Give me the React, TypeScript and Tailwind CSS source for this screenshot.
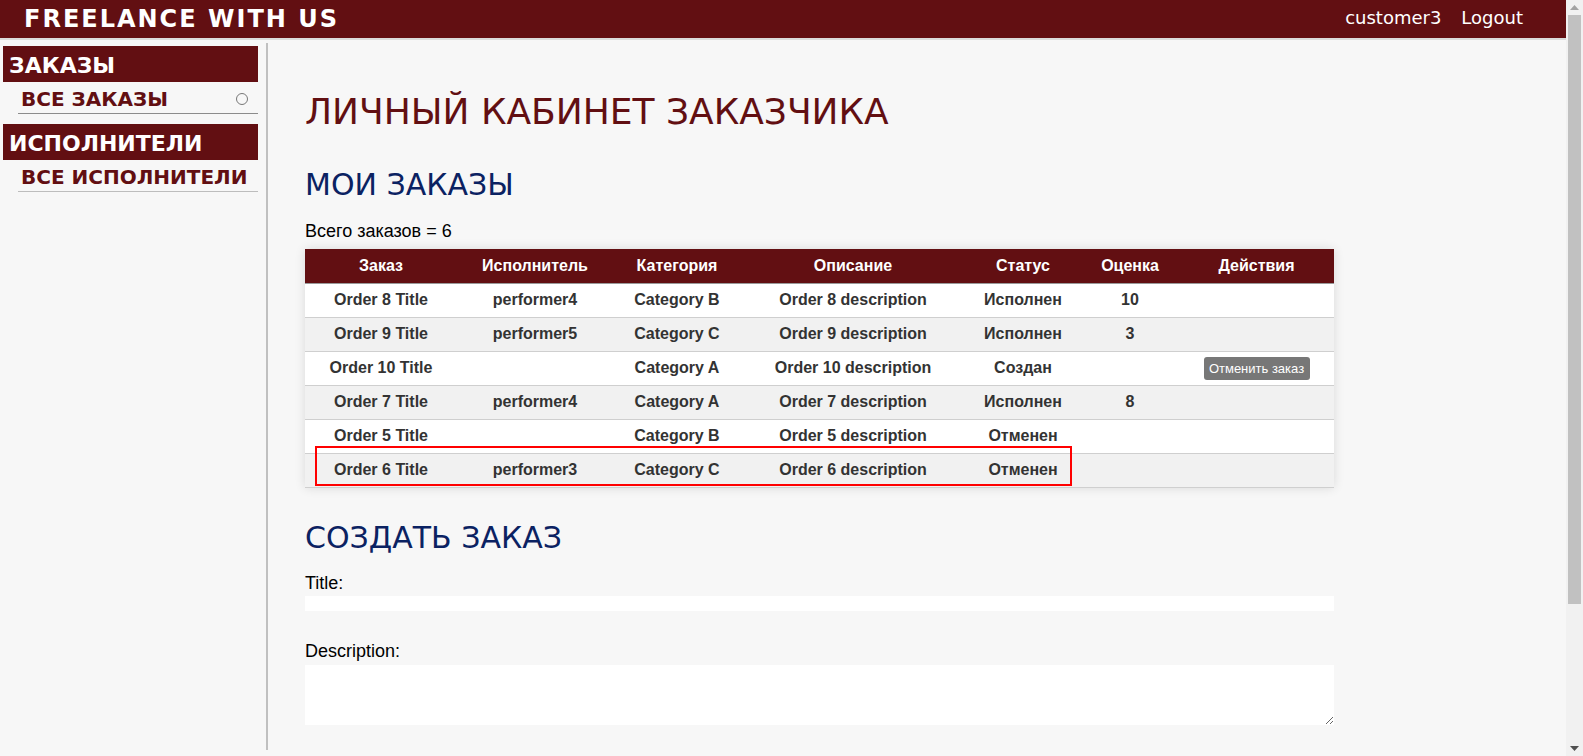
import React from "react";

const rows = [
  { t: "Order 8 Title", p: "performer4", c: "Category B", d: "Order 8 description", s: "Исполнен", r: "10", a: false },
  { t: "Order 9 Title", p: "performer5", c: "Category C", d: "Order 9 description", s: "Исполнен", r: "3", a: false },
  { t: "Order 10 Title", p: "", c: "Category A", d: "Order 10 description", s: "Создан", r: "", a: true },
  { t: "Order 7 Title", p: "performer4", c: "Category A", d: "Order 7 description", s: "Исполнен", r: "8", a: false },
  { t: "Order 5 Title", p: "", c: "Category B", d: "Order 5 description", s: "Отменен", r: "", a: false },
  { t: "Order 6 Title", p: "performer3", c: "Category C", d: "Order 6 description", s: "Отменен", r: "", a: false },
];

const heads = ["Заказ", "Исполнитель", "Категория", "Описание", "Статус", "Оценка", "Действия"];
const widths = [152, 156, 128, 224, 116, 98, 155];

function Scrollbar() {
  return (
    <div className="sticky top-0 w-[17px] h-[756px] bg-[#f1f1f1] flex flex-col items-center shrink-0">
      <div className="h-[15px] w-full flex items-center justify-center">
        <svg width="9" height="5" viewBox="0 0 9 5"><path d="M0 5 L4.5 0 L9 5 Z" fill="#a3a3a3" /></svg>
      </div>
      <div className="w-[13px] h-[589px] bg-[#c1c1c1]" />
      <div className="flex-1" />
      <div className="h-[15px] w-full flex items-center justify-center">
        <svg width="9" height="5" viewBox="0 0 9 5"><path d="M0 0 L4.5 5 L9 0 Z" fill="#505050" /></svg>
      </div>
    </div>
  );
}

export default function App() {
  return (
    <div className="flex items-start bg-[#f7f7f7] font-['DejaVu_Sans',sans-serif]">
      <div className="flex-1 min-w-0 min-h-[940px] bg-[#f7f7f7]">
        <header className="h-[38px] bg-[#620f12] flex items-center justify-between pl-[24px] pr-[43px] shadow-[0_2px_0_#dcdcdc]">
          <div className="text-white font-bold text-[24px] tracking-[2px] leading-none">FREELANCE WITH US</div>
          <div className="flex items-center gap-[20px] text-white text-[18px] leading-none pb-[2px]">
            <span>customer3</span>
            <span>Logout</span>
          </div>
        </header>
        <div className="flex">
          <aside className="w-[268px] h-[707px] mt-[5px] border-r-2 border-[#c0c0c0] pl-[3px] pr-[8px] pt-[3px] shrink-0">
            <div className="h-[36px] bg-[#620f12] text-white font-bold text-[22px] flex items-center pl-[6px] pt-[2px]">ЗАКАЗЫ</div>
            <div className="ml-[15px] h-[32px] border-b border-[#8c8c8c] flex items-center justify-between pl-[3px] pr-[10px] pt-[2px]">
              <span className="text-[#620f12] font-bold text-[20px]">ВСЕ ЗАКАЗЫ</span>
              <span className="w-[12px] h-[12px] rounded-full border border-[#777]" />
            </div>
            <div className="h-[36px] mt-[10px] bg-[#620f12] text-white font-bold text-[22px] flex items-center pl-[6px] pt-[2px]">ИСПОЛНИТЕЛИ</div>
            <div className="ml-[15px] h-[32px] border-b border-[#bdbdbd] flex items-center pl-[3px] pt-[2px]">
              <span className="text-[#620f12] font-bold text-[20px]">ВСЕ ИСПОЛНИТЕЛИ</span>
            </div>
          </aside>
          <main className="pl-[37px] w-[1066px] flex flex-col">
            <h1 className="mt-[53px] text-[36px] leading-[42px] text-[#620f12]">ЛИЧНЫЙ КАБИНЕТ ЗАКАЗЧИКА</h1>
            <h2 className="mt-[34px] text-[30px] leading-[35px] text-[#0b2262]">МОИ ЗАКАЗЫ</h2>
            <div className="mt-[19px] font-['Liberation_Sans',sans-serif] text-[18px] leading-[21px] text-black">Всего заказов = 6</div>
            <div className="relative mt-[7px]">
              <table className="w-[1029px] table-fixed border-collapse font-['Liberation_Sans',sans-serif] shadow-[0_0_10px_rgba(0,0,0,0.12)]">
                <colgroup>
                  {widths.map((w, i) => (
                    <col key={i} style={{ width: w }} />
                  ))}
                </colgroup>
                <thead>
                  <tr className="h-[34px] bg-[#620f12] border-b border-[#9a9a9a]">
                    {heads.map((h) => (
                      <th key={h} className="text-white font-bold text-[16px] text-center p-0">{h}</th>
                    ))}
                  </tr>
                </thead>
                <tbody>
                  {rows.map((r, i) => (
                    <tr key={i} className={`h-[34px] border-b border-[#cfcfcf] ${i % 2 === 1 ? "bg-[#f1f1f1]" : "bg-white"}`}>
                      {[r.t, r.p, r.c, r.d, r.s, r.r].map((v, j) => (
                        <td key={j} className="text-center text-[16px] font-bold text-[#333] p-0">{v}</td>
                      ))}
                      <td className="text-center p-0">
                        {r.a && (
                          <button className="h-[23px] w-[106px] rounded-[3px] bg-[#777] text-white text-[13px] leading-none">Отменить заказ</button>
                        )}
                      </td>
                    </tr>
                  ))}
                </tbody>
              </table>
              <div className="absolute left-[10px] top-[197px] w-[757px] h-[40px] border-2 border-[#ff0000] pointer-events-none" />
            </div>
            <h2 className="mt-[32px] text-[30px] leading-[35px] text-[#0b2262]">СОЗДАТЬ ЗАКАЗ</h2>
            <label className="mt-[18px] font-['Liberation_Sans',sans-serif] text-[18px] leading-[21px] text-black">Title:</label>
            <input className="mt-[2px] w-[1029px] h-[15px] bg-white outline-none border-0" />
            <label className="mt-[30px] font-['Liberation_Sans',sans-serif] text-[18px] leading-[21px] text-black">Description:</label>
            <textarea className="mt-[3px] w-[1029px] h-[60px] bg-white outline-none border-0 block" />
            <div className="h-[200px]" />
          </main>
        </div>
      </div>
      <Scrollbar />
    </div>
  );
}
